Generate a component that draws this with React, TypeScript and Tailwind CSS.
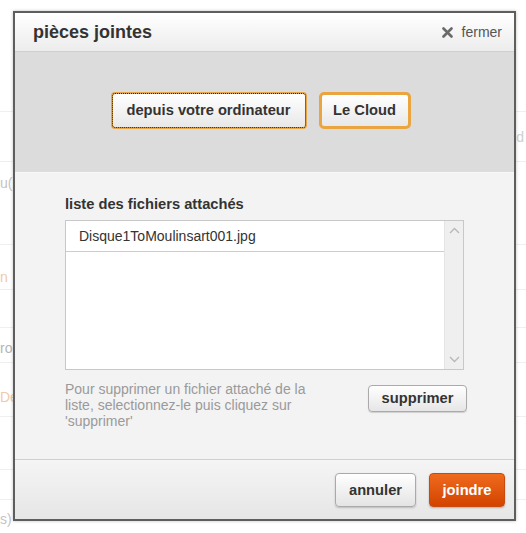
import React from "react";

const font = { fontFamily: '"Liberation Sans", Arial, sans-serif' };

function BgRow({ h, pt = 0, left, right, leftColor, rightColor, last }: { h: number; pt?: number; left?: string; right?: string; leftColor?: string; rightColor?: string; last?: boolean }) {
  return (
    <div className={last ? "flex justify-between" : "flex justify-between border-b border-[#efefef]"} style={{ height: h, paddingTop: pt }}>
      <span className="text-[14px] leading-[16px] whitespace-nowrap" style={{ color: leftColor || "#c4c4c4" }}>{left}</span>
      <span className="text-[14px] leading-[16px] whitespace-nowrap pr-[2px]" style={{ color: rightColor || "#cfcfcf" }}>{right}</span>
    </div>
  );
}

export default function App() {
  return (
    <div className="relative w-[526px] h-[533px] bg-white overflow-hidden" style={font}>
      {/* background page */}
      <div className="flex flex-col">
        <BgRow h={112} />
        <BgRow h={50} pt={17} right="d" />
        <BgRow h={83} pt={13} left="u(s)" />
        <BgRow h={45} pt={24} left="n" leftColor="#f2c9ad" />
        <BgRow h={38} />
        <BgRow h={35} pt={12} left="ro" leftColor="#b5b5b5" />
        <BgRow h={54} pt={26} left="De" leftColor="#f2c9ad" />
        <BgRow h={53} />
        <BgRow h={30} />
        <BgRow h={33} pt={11} left="s)" last />
      </div>

      {/* dialog */}
      <div className="absolute left-[13px] top-[11px] w-[503px] h-[510px] border-2 border-[#5e5e5e] flex flex-col bg-[#f3f3f3] shadow-[0_0_3px_rgba(0,0,0,0.25)]">
        {/* header */}
        <div className="h-[39px] flex items-center justify-between pl-[18px] pr-[12px] bg-gradient-to-b from-white to-[#ececec] border-b border-[#cfcfcf]">
          <span className="text-[18px] font-bold text-[#333]">pièces jointes</span>
          <span className="flex items-center gap-[9px] text-[14px] text-[#555]">
            <svg width="11" height="11" viewBox="0 0 11 11">
              <path d="M1.5 1.5 L9.5 9.5 M9.5 1.5 L1.5 9.5" stroke="#6a6a6a" strokeWidth="2.6" strokeLinecap="round" />
            </svg>
            fermer
          </span>
        </div>

        {/* gray band */}
        <div className="h-[121px] bg-[#dcdcdc] border-b border-[#f8f8f8] flex items-center justify-center gap-[12px] pr-[8px] pb-[4px]">
          <button className="h-[37px] w-[196px] rounded-[4px] border-2 border-[#e9a544] outline outline-1 outline-dotted outline-[#222] -outline-offset-2 bg-gradient-to-b from-white to-[#e8e8e8] text-[14.7px] font-bold text-[#333]">
            depuis votre ordinateur
          </button>
          <button className="h-[37px] w-[92px] rounded-[5px] border-[3px] border-[#eaa540] bg-gradient-to-b from-white to-[#e8e8e8] text-[14.7px] font-bold text-[#333]">
            Le Cloud
          </button>
        </div>

        {/* body */}
        <div className="flex-1 flex flex-col pl-[50px] pr-[50px] pt-[23px]">
          <div className="h-[24px]">
            <div className="text-[14.7px] leading-[16px] font-bold text-[#333]">liste des fichiers attachés</div>
          </div>
          <div className="h-[150px] w-[399px] border border-[#c8c8c8] bg-white flex">
            <div className="flex-1">
              <div className="h-[31px] border-b border-[#cdcdcd] flex items-center pl-[13px] text-[14px] text-[#333]">
                Disque1ToMoulinsart001.jpg
              </div>
            </div>
            <div className="w-[19px] bg-[#efefef] border-l border-[#e4e4e4] flex flex-col justify-between items-center py-[6px]">
              <svg width="11" height="7" viewBox="0 0 11 7">
                <path d="M1 6 L5.5 1.5 L10 6" fill="none" stroke="#b8b8b8" strokeWidth="1.4" />
              </svg>
              <svg width="11" height="7" viewBox="0 0 11 7">
                <path d="M1 1 L5.5 5.5 L10 1" fill="none" stroke="#b8b8b8" strokeWidth="1.4" />
              </svg>
            </div>
          </div>
          <div className="flex justify-between mt-[11px] -mr-[3px]">
            <p className="w-[255px] text-[14px] leading-[16px] text-[#9a9a9a]">
              Pour supprimer un fichier attaché de la liste, selectionnez-le puis cliquez sur 'supprimer'
            </p>
            <button className="mt-[4px] h-[27px] w-[99px] rounded-[4px] border border-[#aaa] bg-gradient-to-b from-white to-[#e6e6e6] shadow-[0_1px_1px_rgba(0,0,0,0.15)] text-[14.7px] font-bold text-[#333]">
              supprimer
            </button>
          </div>
        </div>

        {/* footer */}
        <div className="h-[60px] border-t border-[#d0d0d0] bg-gradient-to-b from-[#f5f5f5] to-[#e6e6e6] flex items-center justify-end gap-[13px] pr-[9px] pt-[1px]">
          <button className="h-[34px] w-[81px] rounded-[4px] border border-[#aaa] bg-gradient-to-b from-white to-[#e4e4e4] shadow-[0_1px_2px_rgba(0,0,0,0.2)] text-[14.7px] font-bold text-[#333]">
            annuler
          </button>
          <button className="h-[34px] w-[76px] rounded-[4px] border border-[#c84a10] bg-gradient-to-b from-[#f06a1c] to-[#d24300] shadow-[0_1px_2px_rgba(0,0,0,0.25)] text-[14.7px] font-bold text-white">
            joindre
          </button>
        </div>
      </div>
    </div>
  );
}
